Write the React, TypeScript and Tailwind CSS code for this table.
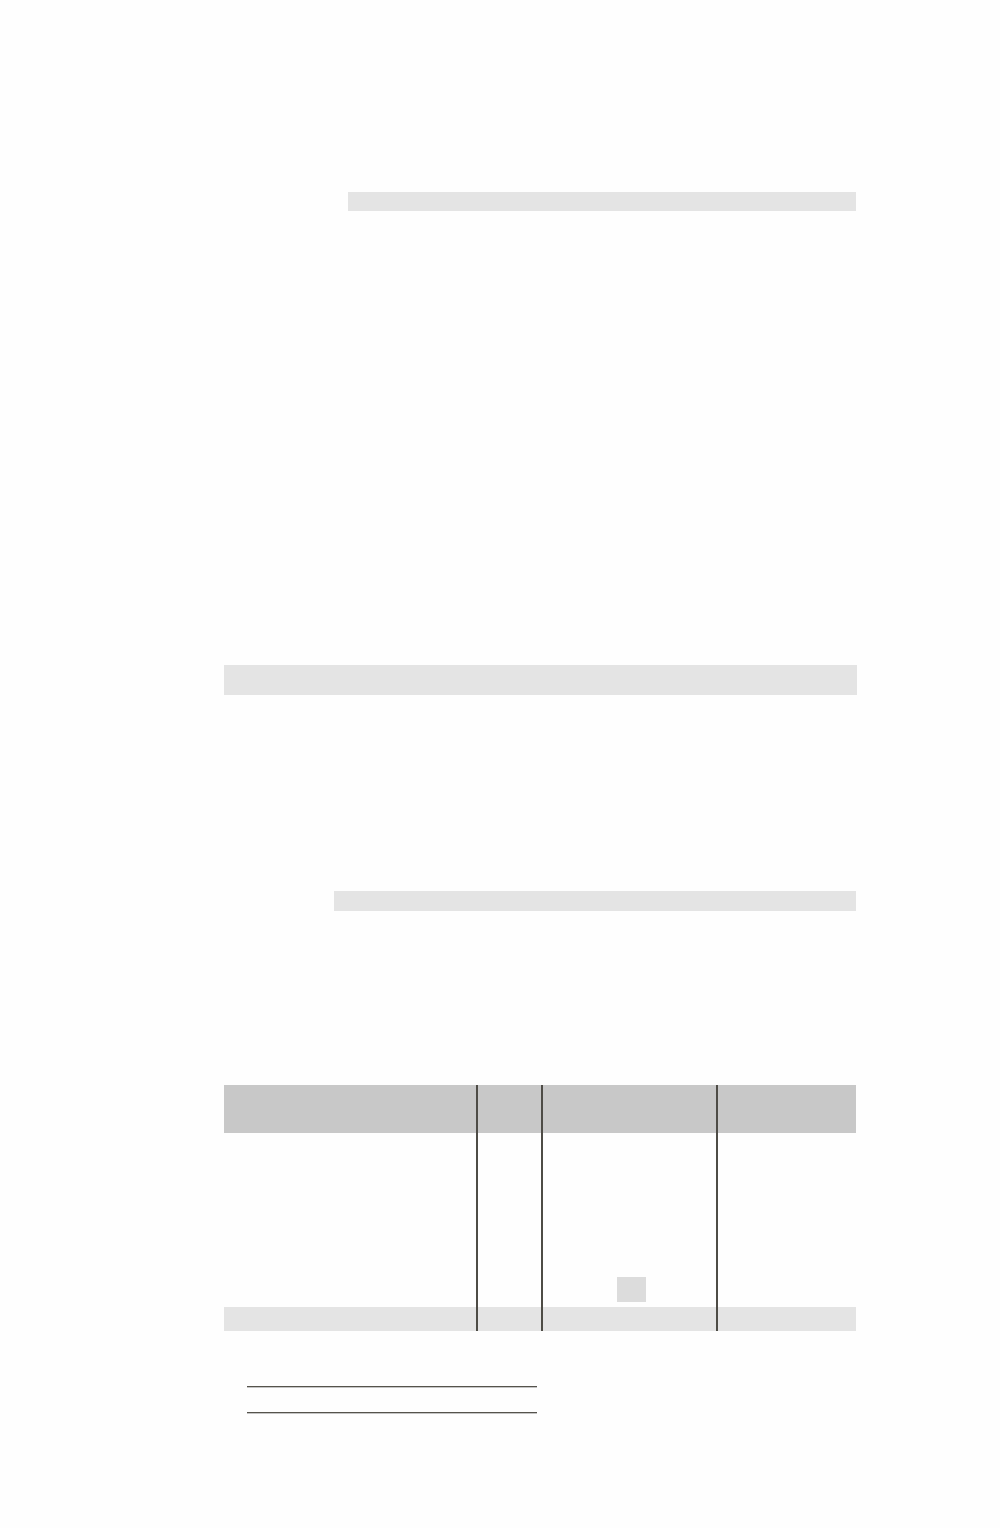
import React from "react";

const cols = [
  { w: "w-[252px]", line: false, box: false },
  { w: "w-[65px]", line: true, box: false },
  { w: "w-[175px]", line: true, box: true },
  { w: "w-[140px]", line: true, box: false },
];

export default function App() {
  return (
    <div className="min-h-[1528px] w-full bg-[#fefefe] font-['Liberation_Sans',sans-serif]">
      <div className="ml-[224px] w-[633px] pt-[192px]">
        <div className="ml-[124px] mr-px h-[19px] bg-[#e4e4e4]" />
        <div className="mt-[454px] h-[30px] bg-[#e4e4e4]" />
        <div className="mt-[196px] ml-[110px] mr-px h-[20px] bg-[#e4e4e4]" />

        <div className="mt-[174px] flex w-[632px]">
          {cols.map((c, i) => (
            <div
              key={i}
              className={`${c.w} flex flex-col ${c.line ? "border-l-2 border-[#4e4c46]" : ""}`}
            >
              <div className="h-[48px] bg-[#c8c8c8]" />
              <div className="flex h-[174px] flex-col justify-end">
                {c.box && <div className="mb-[5px] ml-[74px] h-[25px] w-[29px] bg-[#dcdcdc]" />}
              </div>
              <div className="h-[24px] bg-[#e4e4e4]" />
            </div>
          ))}
        </div>

        <div className="mt-[55px] ml-[23px] w-[290px]">
          <div className="h-px bg-[#55534c] shadow-[0_1px_0_#c4c4c4]" />
          <div className="mt-[25px] h-px bg-[#55534c] shadow-[0_1px_0_#c4c4c4]" />
        </div>
      </div>
    </div>
  );
}
